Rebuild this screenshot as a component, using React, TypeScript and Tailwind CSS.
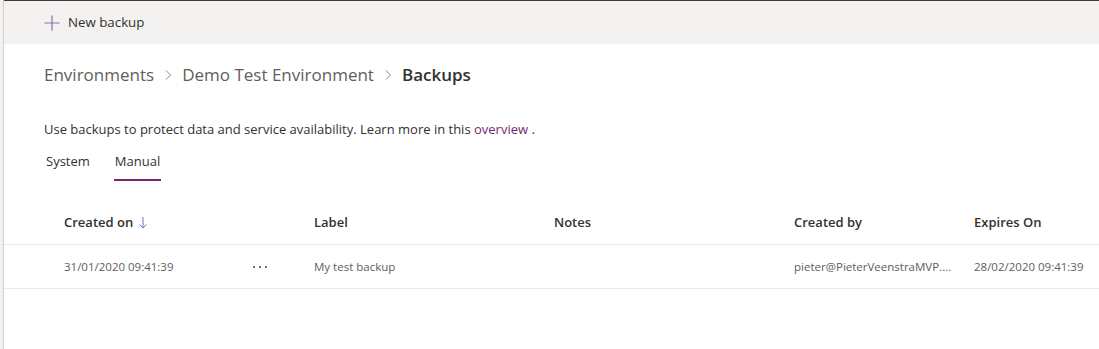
import * as React from 'react';

const font = { fontFamily: '"Segoe UI", "Open Sans", "Liberation Sans", sans-serif' };

function PlusIcon() {
  return (
    <svg width="16" height="16" viewBox="0 0 16 16" fill="none">
      <path d="M8 0.5v15M0.5 8h15" stroke="#8a6fae" strokeWidth="1.2" />
    </svg>
  );
}

function Chevron() {
  return (
    <svg width="12" height="12" viewBox="0 0 12 12" fill="none" className="mx-[8px]">
      <path d="M4 1.5 8.5 6 4 10.5" stroke="#8a8886" strokeWidth="1" />
    </svg>
  );
}

export default function App() {
  return (
    <div className="flex h-[349px] w-[1099px] overflow-hidden bg-white text-[#323130]" style={font}>
      <div className="w-[3px] shrink-0 bg-[#f3f2f1]" />
      <div className="w-px shrink-0 bg-[#d2d0ce]" />
      <div className="flex min-w-0 flex-1 flex-col">
        <div className="flex h-[44px] items-center border-t border-[#3b3a39] bg-[#f3f2f1] pl-[40px]">
          <button className="flex items-center gap-[8px] text-[13.3px] text-[#323130]">
            <PlusIcon />
            <span>New backup</span>
          </button>
        </div>

        <div className="flex h-[62px] items-center pl-[40px] text-[17px] text-[#605e5c]">
          <span>Environments</span>
          <Chevron />
          <span>Demo Test Environment</span>
          <Chevron />
          <span className="font-semibold text-[#323130]">Backups</span>
        </div>

        <div className="mt-[14px] pl-[40px] text-[13px]">
          Use backups to protect data and service availability. Learn more in this{' '}
          <a className="text-[#742774]">overview</a> .
        </div>

        <div className="mt-[3px] flex gap-[24px] pl-[41px] text-[13px]">
          <div className="flex h-[38px] flex-col items-center justify-center px-[1px]">
            <span>System</span>
          </div>
          <div className="relative flex h-[38px] flex-col items-center justify-center">
            <span className="font-medium">Manual</span>
            <div className="absolute bottom-0 left-[-1px] right-[-1px] h-[2px] bg-[#742774]" />
          </div>
        </div>

        <div className="mt-[21px] flex h-[43px] items-center border-b border-[#edebe9] text-[13px] font-semibold">
          <div className="flex w-[310px] items-center pl-[60px]">
            Created on
            <svg width="10" height="14" viewBox="0 0 10 14" fill="none" className="ml-[5px]">
              <path d="M5 1v11M1.5 8.5 5 12l3.5-3.5" stroke="#5b7fc7" strokeWidth="1" />
            </svg>
          </div>
          <div className="w-[240px]">Label</div>
          <div className="w-[240px]">Notes</div>
          <div className="w-[180px]">Created by</div>
          <div>Expires On</div>
        </div>

        <div className="flex h-[44px] items-center border-b border-[#edebe9] pt-[2px] text-[11.5px] text-[#605e5c]">
          <div className="flex w-[310px] items-center pl-[60px]">
            <span className="w-[189px]">31/01/2020 09:41:39</span>
            <span className="flex gap-[4px]">
              <i className="block h-[2px] w-[2px] bg-[#8d5fa8]" />
              <i className="block h-[2px] w-[2px] bg-[#8d5fa8]" />
              <i className="block h-[2px] w-[2px] bg-[#8d5fa8]" />
            </span>
          </div>
          <div className="w-[240px]">My test backup</div>
          <div className="w-[240px]"></div>
          <div className="w-[180px] pr-[22px]">
            <div className="truncate">pieter@PieterVeenstraMVP.onmicrosoft.com</div>
          </div>
          <div className="whitespace-nowrap">28/02/2020 09:41:39</div>
        </div>
      </div>
    </div>
  );
}
